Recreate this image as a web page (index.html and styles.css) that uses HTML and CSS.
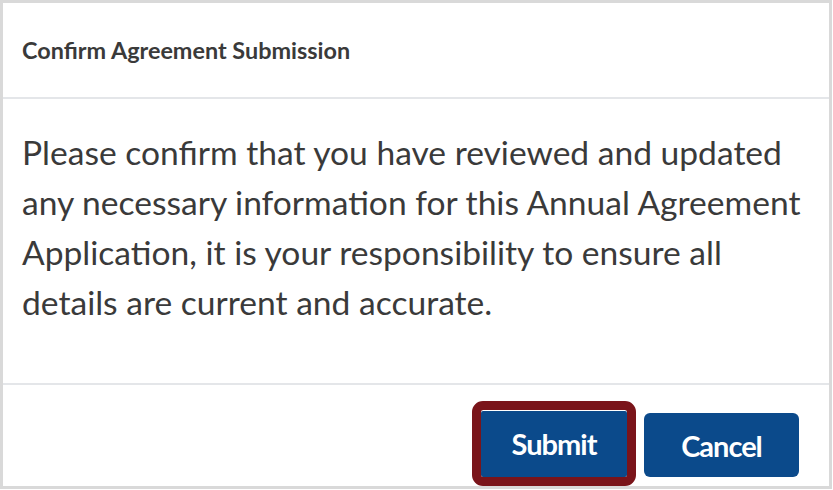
FILE: index.html
```html
<!DOCTYPE html>
<html lang="en">
<head>
<meta charset="utf-8">
<title>Confirm Agreement Submission</title>
<link rel="stylesheet" href="styles.css">
</head>
<body>
<div class="modal">
  <div class="modal-header">
    <h1 class="modal-title">Confirm Agreement Submission</h1>
  </div>
  <div class="modal-body">
    <p class="message">Please confirm that you have reviewed and updated any necessary information for this Annual Agreement Application, it is your responsibility to ensure all details are current and accurate.</p>
  </div>
  <div class="modal-footer">
    <button class="btn btn-submit" type="button">Submit</button>
    <button class="btn btn-cancel" type="button">Cancel</button>
  </div>
</div>
</body>
</html>
```

FILE: styles.css
```css
* { box-sizing: border-box; }
html, body { margin: 0; padding: 0; background: #ffffff; }
body { font-family: Lato, "Open Sans", sans-serif; }

.modal {
  width: 832px;
  height: 489px;
  border: 3px solid #d9d9d9;
  background: #fff;
  display: flex;
  flex-direction: column;
}

.modal-header {
  height: 96px;
  display: flex;
  align-items: center;
  padding-left: 19px;
  border-bottom: 2px solid #e4e6e9;
}
.modal-title {
  margin: 0;
  font-size: 23.4px;
  font-weight: 700;
  color: #3a3a3a;
  padding-bottom: 1px;
}

.modal-body {
  height: 286px;
  padding: 28px 20px 0 19px;
  border-bottom: 2px solid #e4e6e9;
}
.message {
  margin: 0;
  font-size: 33.6px;
  line-height: 50px;
  color: #3a3a3a;
}

.modal-footer {
  flex: 1;
  display: flex;
  justify-content: flex-end;
  align-items: flex-end;
  gap: 17px;
  padding: 0 30px 9px 0;
}
.btn {
  font-family: Lato, "Open Sans", sans-serif;
  font-weight: 700;
  font-size: 29px;
  letter-spacing: -1px;
  color: #ffffff;
  background: #0b4a8b;
  border: none;
  border-radius: 6px;
  cursor: pointer;
}
.btn-submit {
  width: 146px;
  height: 67px;
  border-radius: 2px;
  outline: 9px solid #7a141a;
  outline-offset: 0;
  box-shadow: inset 0 1px 0 #ffffff;
}
.btn-cancel {
  width: 155px;
  height: 64px;
}
```
